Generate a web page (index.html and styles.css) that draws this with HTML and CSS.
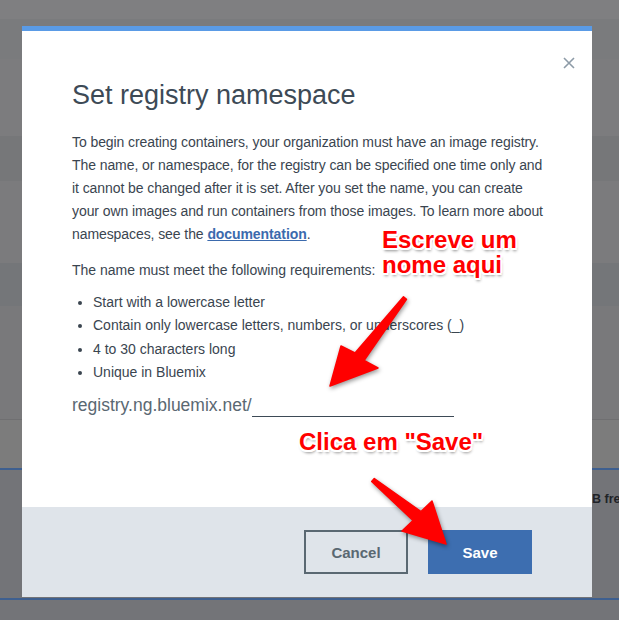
FILE: index.html
```html
<!DOCTYPE html>
<html>
<head>
<meta charset="utf-8">
<link rel="stylesheet" href="styles.css">
</head>
<body>
<div class="bg">
  <div class="band b1"></div>
  <div class="band b2"></div>
  <div class="band b3"></div>
  <div class="band b4"></div>
  <div class="band b5"></div>
  <div class="band b6"></div>
  <div class="band b7"></div>
  <div class="band b8"></div>
  <div class="band b9"><span class="free">B fre</span></div>
  <div class="band b10"></div>
</div>

<div class="dialog">
  <div class="dialog-top"></div>
  <div class="dialog-body">
    <svg class="close" width="12" height="12" viewBox="0 0 12 12"><path d="M1 1 L11 11 M11 1 L1 11" stroke="#8d9ba7" stroke-width="1.6" fill="none"/></svg>
    <h1 class="title">Set registry namespace</h1>
    <p class="intro">To begin creating containers, your organization must have an image registry.<br>The name, or namespace, for the registry can be specified one time only and<br>it cannot be changed after it is set. After you set the name, you can create<br>your own images and run containers from those images. To learn more about<br>namespaces, see the <a class="link" href="#">documentation</a>.</p>
    <p class="req">The name must meet the following requirements:</p>
    <ul class="reqlist">
      <li>Start with a lowercase letter</li>
      <li>Contain only lowercase letters, numbers, or underscores (_)</li>
      <li>4 to 30 characters long</li>
      <li>Unique in Bluemix</li>
    </ul>
    <div class="registry">
      <span class="prefix">registry.ng.bluemix.net/</span>
      <span class="input"></span>
    </div>
  </div>
  <div class="dialog-footer">
    <div class="btn cancel">Cancel</div>
    <div class="btn save">Save</div>
  </div>
</div>

<div class="note note1">Escreve um<br>nome aqui</div>
<div class="note note2">Clica em "Save"</div>

<svg class="arrows" width="619" height="620" viewBox="0 0 619 620">
  <polygon points="406.5,299.3 364,360.5 378,368 330,386 341,346 355,353 403.5,296.7" fill="#ff0000" stroke="#ff0000" stroke-width="1.5" stroke-linejoin="round"/>
  <polygon points="371.7,481.5 413,520.5 402,531 446,544 432,501 421,511.5 374.3,478.5" fill="#ff0000" stroke="#ff0000" stroke-width="1.5" stroke-linejoin="round"/>
</svg>
</body>
</html>
```

FILE: styles.css
```css
html, body {
  margin: 0;
  padding: 0;
}
body {
  width: 619px;
  height: 620px;
  overflow: hidden;
  position: relative;
  background: #737478;
  font-family: "Liberation Sans", Arial, sans-serif;
}
.bg {
  display: flex;
  flex-direction: column;
}
.band { width: 619px; }
.b1 { height: 19px; background: #7f7f81; }
.b2 { height: 40px; background: #7a7b7d; }
.b3 { height: 77px; background: #7c7c7e; }
.b4 { height: 45px; background: #767779; }
.b5 { height: 82px; background: #7b7b7d; }
.b6 { height: 43px; background: #747679; }
.b7 { height: 114px; background: #79797b; border-bottom: 1px solid #6f6f71; box-sizing: border-box; }
.b8 { height: 48px; background: #7c7c7c; }
.b9 {
  height: 132px;
  background: #737478;
  border-top: 2px solid #3e5f8f;
  border-bottom: 2px solid #3e5f8f;
  box-sizing: border-box;
  padding-top: 21px;
}
.b10 { height: 20px; background: #737478; }
.free {
  display: block;
  margin-left: 592px;
  font-size: 12.5px;
  font-weight: bold;
  color: #1f2328;
  white-space: nowrap;
  line-height: 16px;
}

.dialog {
  position: absolute;
  left: 22px;
  top: 26px;
  width: 570px;
  height: 571px;
  background: #fff;
  display: flex;
  flex-direction: column;
}
.dialog-top {
  height: 5px;
  background: #5a9be6;
}
.dialog-body {
  flex: 1;
  position: relative;
  padding: 48px 50px 0 50px;
  color: #3a4550;
}
.close {
  position: absolute;
  top: 26px;
  right: 17px;
}
.title {
  margin: 0 0 20px 0;
  font-size: 27px;
  line-height: 32px;
  font-weight: normal;
  color: #3d4a56;
}
.intro {
  margin: 0 0 13px 0;
  font-size: 14px;
  line-height: 23px;
  white-space: nowrap;
  letter-spacing: -0.08px;
}
.link {
  color: #3b6aad;
  font-weight: bold;
  text-decoration: underline;
}
.req {
  margin: 0 0 9px 0;
  font-size: 14px;
  line-height: 23px;
}
.reqlist {
  margin: 0;
  padding-left: 21px;
  font-size: 14px;
  line-height: 23.3px;
}
.registry {
  margin-top: 9px;
  display: flex;
  height: 24px;
}
.prefix {
  font-size: 17.5px;
  line-height: 24px;
  color: #5a6872;
}
.input {
  width: 202px;
  height: 24px;
  box-sizing: border-box;
  border-bottom: 1px solid #3d4a56;
}
.dialog-footer {
  height: 90px;
  background: #dfe4ea;
  display: flex;
  justify-content: flex-end;
  align-items: flex-start;
  gap: 20px;
  padding: 23px 60px 0 0;
  box-sizing: border-box;
}
.btn {
  width: 104px;
  height: 44px;
  box-sizing: border-box;
  display: flex;
  align-items: center;
  justify-content: center;
  font-size: 15px;
  font-weight: bold;
}
.cancel {
  border: 2px solid #5a6872;
  color: #5a6872;
}
.save {
  background: #3d6eb0;
  color: #fff;
}

.note {
  position: absolute;
  font-size: 24px;
  line-height: 25px;
  font-weight: bold;
  color: #ff0000;
  white-space: nowrap;
  text-shadow:
    -1.5px -1.5px 0 #fff, 1.5px -1.5px 0 #fff, -1.5px 1.5px 0 #fff, 1.5px 1.5px 0 #fff,
    0 -2px 0 #fff, 0 2px 0 #fff, -2px 0 0 #fff, 2px 0 0 #fff,
    1px 3px 3px rgba(0,0,0,0.45);
}
.note1 { left: 382px; top: 227px; }
.note2 { left: 299px; top: 429px; }

.arrows {
  position: absolute;
  left: 0;
  top: 0;
  pointer-events: none;
  filter: drop-shadow(1px 2px 2px rgba(0,0,0,0.4));
}
```
